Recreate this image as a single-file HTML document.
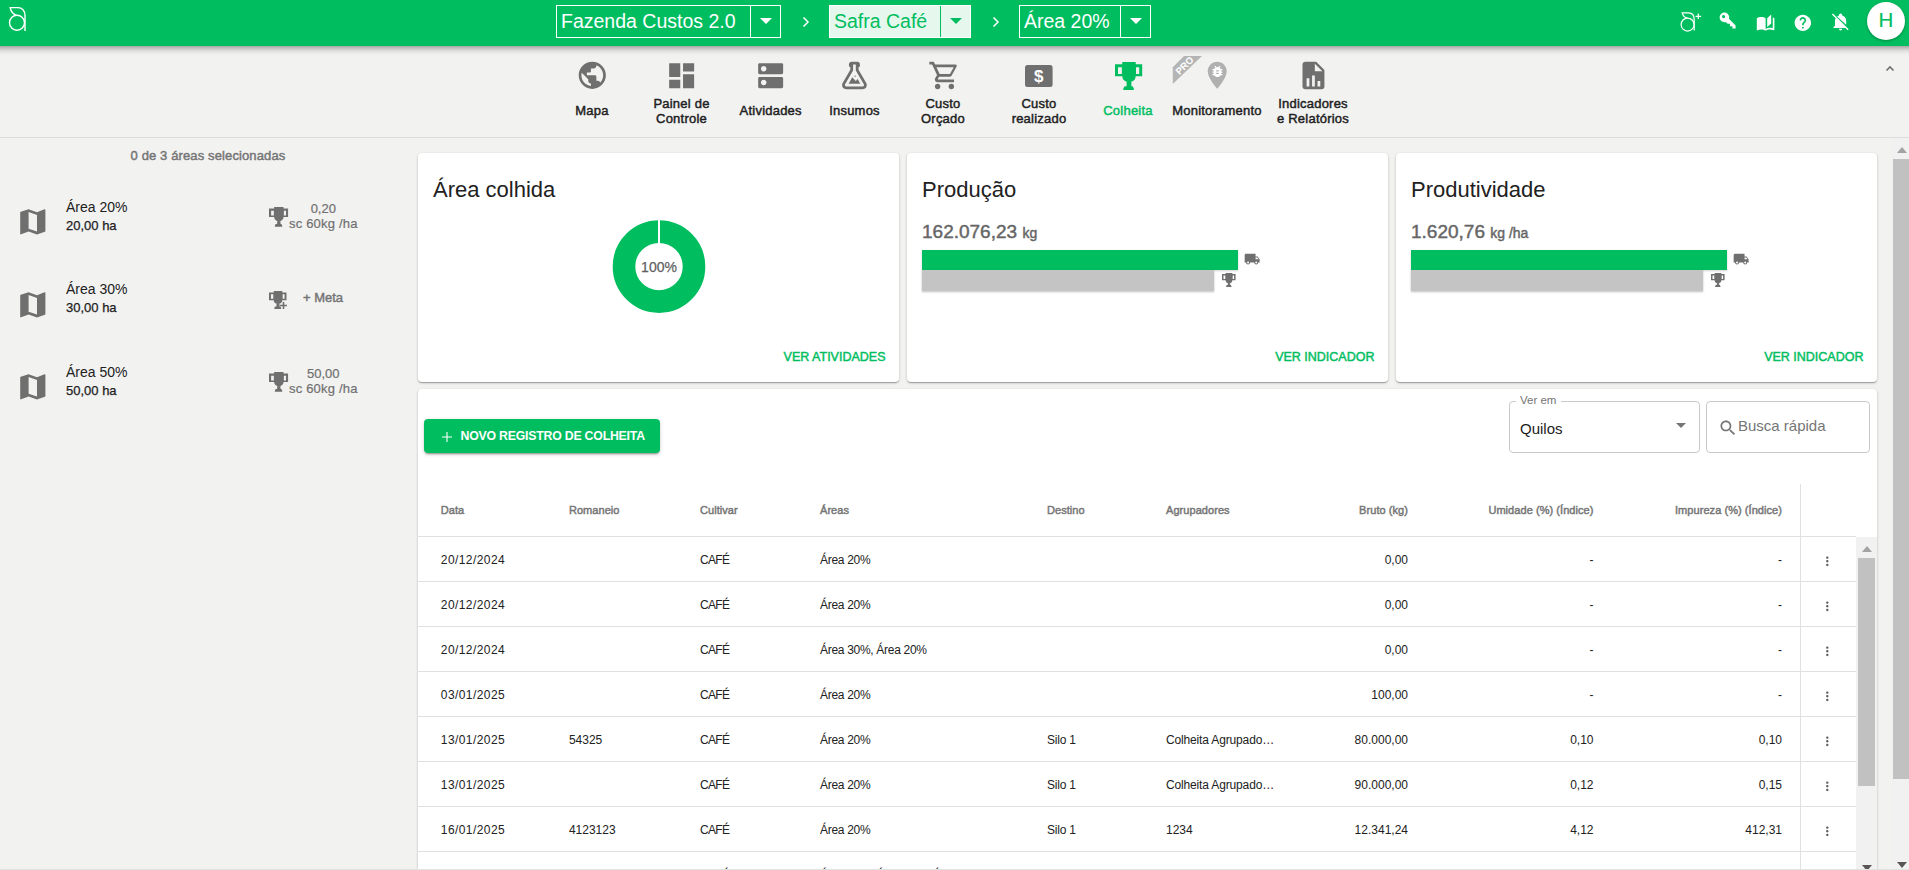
<!DOCTYPE html>
<html><head><meta charset="utf-8"><title>Colheita</title>
<style>
html,body{margin:0;padding:0;width:1909px;height:870px;overflow:hidden;background:#F2F2F1;font-family:"Liberation Sans", sans-serif;}
.t{position:absolute;white-space:nowrap;line-height:1;}
.i{position:absolute;overflow:visible;}
.b{position:absolute;box-sizing:border-box;}
</style></head><body>

<div class="b" style="left:418.00px;top:153.00px;width:481.00px;height:229.00px;background:#fff;border-radius:4px;box-shadow:0 1px 3px rgba(0,0,0,0.2),0 1px 1px rgba(0,0,0,0.14),0 2px 1px -1px rgba(0,0,0,0.12);"></div>
<div class="b" style="left:907.00px;top:153.00px;width:481.00px;height:229.00px;background:#fff;border-radius:4px;box-shadow:0 1px 3px rgba(0,0,0,0.2),0 1px 1px rgba(0,0,0,0.14),0 2px 1px -1px rgba(0,0,0,0.12);"></div>
<div class="b" style="left:1396.00px;top:153.00px;width:481.00px;height:229.00px;background:#fff;border-radius:4px;box-shadow:0 1px 3px rgba(0,0,0,0.2),0 1px 1px rgba(0,0,0,0.14),0 2px 1px -1px rgba(0,0,0,0.12);"></div>
<div class="b" style="left:418.00px;top:389.00px;width:1459.00px;height:600.00px;background:#fff;border-radius:4px;box-shadow:0 1px 3px rgba(0,0,0,0.2),0 1px 1px rgba(0,0,0,0.14),0 2px 1px -1px rgba(0,0,0,0.12);"></div>
<div class="b" style="left:-20.00px;top:0.00px;width:1949.00px;height:45.50px;background:#00BE5F;box-shadow:0 2px 4px -1px rgba(0,0,0,0.2),0 4px 5px 0 rgba(0,0,0,0.14),0 1px 10px 0 rgba(0,0,0,0.12);z-index:5"></div>
<div style="position:absolute;left:0;top:0;width:1909px;height:46px;z-index:6">
<svg class="i" style="left:0;top:0;width:40px;height:40px" viewBox="0 0 40 40"><g fill="none" stroke="#fff" stroke-width="1.4"><circle cx="17" cy="22.8" r="7.5"/><path d="M25 31V15.5C25 10.5 22 7.6 18 7.6H10.2C10.8 11 13 14 16.5 15.3"/></g></svg>
<div class="b" style="left:556.00px;top:5.00px;width:225.00px;height:33.00px;border:1px solid #fff;"></div>
<div class="b" style="left:750.00px;top:6.00px;width:1.00px;height:31.00px;background:#fff"></div>
<div class="t" style="left:561.00px;top:12.49px;font-size:19.5px;color:#fff;font-weight:normal;">Fazenda Custos 2.0</div>
<svg class="i" style="left:759.50px;top:18px;width:12px;height:6px" viewBox="0 0 12 6"><path fill="#fff" d="M0 0h12L6 6z"/></svg>
<svg class="i" style="left:802px;top:16px;width:8px;height:12px" viewBox="0 0 8 12"><path fill="none" stroke="#fff" stroke-width="1.5" d="M1.5 1.5L6 6L1.5 10.5"/></svg>
<div class="b" style="left:829.00px;top:5.00px;width:142.00px;height:33.00px;border:1px solid #fff;background:#E6F7EE;"></div>
<div class="b" style="left:940.00px;top:6.00px;width:1.00px;height:31.00px;background:#00BE5F"></div>
<div class="t" style="left:834.00px;top:12.49px;font-size:19.5px;color:#00BE5F;font-weight:normal;">Safra Café</div>
<svg class="i" style="left:949.50px;top:18px;width:12px;height:6px" viewBox="0 0 12 6"><path fill="#00BE5F" d="M0 0h12L6 6z"/></svg>
<svg class="i" style="left:992px;top:16px;width:8px;height:12px" viewBox="0 0 8 12"><path fill="none" stroke="#fff" stroke-width="1.5" d="M1.5 1.5L6 6L1.5 10.5"/></svg>
<div class="b" style="left:1019.00px;top:5.00px;width:132.00px;height:33.00px;border:1px solid #fff;"></div>
<div class="b" style="left:1120.00px;top:6.00px;width:1.00px;height:31.00px;background:#fff"></div>
<div class="t" style="left:1024.00px;top:12.49px;font-size:19.5px;color:#fff;font-weight:normal;">Área 20%</div>
<svg class="i" style="left:1129.50px;top:18px;width:12px;height:6px" viewBox="0 0 12 6"><path fill="#fff" d="M0 0h12L6 6z"/></svg>
<svg class="i" style="left:1670px;top:0;width:40px;height:40px" viewBox="0 0 40 40"><g fill="none" stroke="#fff" stroke-width="1.2"><circle cx="17.6" cy="24.6" r="6.5"/><path d="M24.2 30.5V19.5C24.2 15.5 22 12.9 18.5 12.9H12.2C12.8 15.5 14.5 17.5 17.5 18.2"/><path d="M28.3 13.5v5.5M25.6 16.3h5.5"/></g></svg>
<svg class="i" style="left:1718.40px;top:11.30px;width:19.20px;height:19.20px;" viewBox="0 0 24 24"><path fill="#fff" d="M22,18V22H18V19H15V16H12L9.74,13.74C9.19,13.91 8.61,14 8,14A6,6 0 0,1 2,8A6,6 0 0,1 8,2A6,6 0 0,1 14,8C14,8.61 13.91,9.19 13.74,9.74L22,18M7,5A2,2 0 0,0 5,7A2,2 0 0,0 7,9A2,2 0 0,0 9,7A2,2 0 0,0 7,5Z"/></svg>
<svg class="i" style="left:1756.20px;top:13.40px;width:19.20px;height:19.20px;" viewBox="0 0 24 24"><path fill="#fff" d="M19 2L14 6.5V17.5L19 13V2M6.5 5C4.55 5 2.45 5.4 1 6.5V21.16C1 21.41 1.25 21.66 1.5 21.66C1.6 21.66 1.65 21.59 1.75 21.59C3.1 20.94 5.05 20.5 6.5 20.5C8.45 20.5 10.55 20.9 12 22C13.35 21.15 15.8 20.5 17.5 20.5C19.15 20.5 20.85 20.81 22.25 21.56C22.35 21.61 22.4 21.59 22.5 21.59C22.75 21.59 23 21.34 23 21.09V6.5C22.4 6.05 21.75 5.75 21 5.5V19C19.9 18.65 18.7 18.5 17.5 18.5C15.8 18.5 13.35 19.15 12 20V6.5C10.55 5.4 8.45 5 6.5 5Z"/></svg>
<svg class="i" style="left:1793.00px;top:13.20px;width:19.70px;height:19.70px;" viewBox="0 0 24 24"><path fill="#fff" d="M12 2C6.48 2 2 6.48 2 12s4.48 10 10 10 10-4.48 10-10S17.52 2 12 2zm1 17h-2v-2h2v2zm2.07-7.75l-.9.92C13.45 12.9 13 13.5 13 15h-2v-.5c0-1.1.45-2.1 1.17-2.83l1.24-1.26c.37-.36.59-.86.59-1.41 0-1.1-.9-2-2-2s-2 .9-2 2H8c0-2.21 1.79-4 4-4s4 1.79 4 4c0 .88-.36 1.680-.93 2.25z"/></svg>
<svg class="i" style="left:1831.10px;top:11.50px;width:19.20px;height:19.20px;" viewBox="0 0 24 24"><path fill="#fff" d="M20.84,22.73L18.11,20H3V19L5,17V11C5,9.86 5.29,8.73 5.83,7.72L1.11,3L2.39,1.73L22.11,21.46L20.84,22.73M19,15.8V11C19,7.9 16.97,5.17 14,4.29C14,4.19 14,4.1 14,4A2,2 0 0,0 12,2A2,2 0 0,0 10,4C10,4.1 10,4.19 10,4.29C9.110,4.55 8.29,5 7.55,5.6L19,15.8M12,23A2,2 0 0,0 14,21H10A2,2 0 0,0 12,23Z"/></svg>
<div class="b" style="left:1867.00px;top:2.40px;width:38.00px;height:38.00px;background:#fff;border-radius:50%;box-shadow:0 1px 3px rgba(0,0,0,0.3)"></div>
<div class="t" style="left:1586.00px;width:600px;text-align:center;top:10.45px;font-size:20.5px;color:#00BE5F;font-weight:normal;-webkit-text-stroke:0.2px currentColor">H</div>
</div>
<div class="b" style="left:0.00px;top:137.00px;width:1909.00px;height:1.00px;background:#DCDCDC"></div>
<svg class="i" style="left:575.80px;top:59.20px;width:32.60px;height:32.60px;" viewBox="0 0 24 24"><path fill="#6F6F6F" d="M12 2C6.48 2 2 6.48 2 12s4.48 10 10 10 10-4.48 10-10S17.52 2 12 2zm-1 17.93c-3.95-.49-7-3.850-7-7.93 0-.62.08-1.21.21-1.79L9 15v1c0 1.1.9 2 2 2v1.93zm6.9-2.54c-.26-.81-1-1.39-1.9-1.39h-1v-3c0-.55-.45-1-1-1H8v-2h2c.55 0 1-.45 1-1V7h2c1.1 0 2-.9 2-2v-.41c2.93 1.19 5 4.060 5 7.41 0 2.08-.8 3.97-2.1 5.39z"/></svg>
<div class="t" style="left:292.00px;width:600px;text-align:center;top:104.00px;font-size:13px;color:#212121;font-weight:normal;-webkit-text-stroke:0.45px currentColor;letter-spacing:0.22px">Mapa</div>
<svg class="i" style="left:664.80px;top:58.70px;width:33.30px;height:33.30px;" viewBox="0 0 24 24"><path fill="#6F6F6F" d="M3 13h8V3H3v10zm0 8h8v-6H3v6zm10 0h8V11h-8v10zm0-18v6h8V3h-8z"/></svg>
<div class="t" style="left:381.50px;width:600px;text-align:center;top:96.60px;font-size:13px;color:#212121;font-weight:normal;-webkit-text-stroke:0.45px currentColor;letter-spacing:0.22px">Painel de</div>
<div class="t" style="left:381.50px;width:600px;text-align:center;top:111.70px;font-size:13px;color:#212121;font-weight:normal;-webkit-text-stroke:0.45px currentColor;letter-spacing:0.22px">Controle</div>
<svg class="i" style="left:754.20px;top:58.70px;width:33.30px;height:33.30px;" viewBox="0 0 24 24"><path fill="#6F6F6F" d="M20 13H4c-.55 0-1 .45-1 1v6c0 .55.45 1 1 1h16c.55 0 1-.45 1-1v-6c0-.55-.45-1-1-1zM7 19c-1.1 0-2-.9-2-2s.9-2 2-2 2 .9 2 2-.9 2-2 2zM20 3H4c-.55 0-1 .45-1 1v6c0 .55.45 1 1 1h16c.55 0 1-.45 1-1V4c0-.55-.45-1-1-1zM7 9c-1.1 0-2-.9-2-2s.9-2 2-2 2 .9 2 2-.9 2-2 2z"/></svg>
<div class="t" style="left:470.70px;width:600px;text-align:center;top:104.00px;font-size:13px;color:#212121;font-weight:normal;-webkit-text-stroke:0.45px currentColor;letter-spacing:0.22px">Atividades</div>
<svg class="i" style="left:837.90px;top:59.20px;width:32.90px;height:32.90px;" viewBox="0 0 24 24"><path fill="#6F6F6F" d="M5,19A1,1 0 0,0 6,20H18A1,1 0 0,0 19,19C19,18.79 18.93,18.59 18.82,18.43L13,8.35V4H11V8.35L5.18,18.43C5.07,18.59 5,18.79 5,19M6,22A3,3 0 0,1 3,19C3,18.4 3.18,17.84 3.5,17.37L9,7.810V6A1,1 0 0,1 8,5V4A2,2 0 0,1 10,2H14A2,2 0 0,1 16,4V5A1,1 0 0,1 15,6V7.81L20.5,17.37C20.82,17.84 21,18.4 21,19A3,3 0 0,1 18,22H6M13,16L14.34,14.66L16.27,18H7.73L10.39,13.39L13,16M12.5,12A0.5,0.5 0 0,1 13,12.5A0.5,0.5 0 0,1 12.5,13A0.5,0.5 0 0,1 12,12.5A0.5,0.5 0 0,1 12.5,12Z"/></svg>
<div class="t" style="left:554.50px;width:600px;text-align:center;top:104.00px;font-size:13px;color:#212121;font-weight:normal;-webkit-text-stroke:0.45px currentColor;letter-spacing:0.22px">Insumos</div>
<svg class="i" style="left:927.50px;top:59.20px;width:32.90px;height:32.90px;" viewBox="0 0 24 24"><path fill="#6F6F6F" d="M17,18A2,2 0 0,1 19,20A2,2 0 0,1 17,22C15.89,22 15,21.1 15,20C15,18.89 15.89,18 17,18M1,2H4.27L5.21,4H20A1,1 0 0,1 21,5C21,5.17 20.95,5.34 20.88,5.5L17.3,11.97C16.96,12.58 16.3,13 15.55,13H8.1L7.2,14.63L7.17,14.75A0.25,0.25 0 0,0 7.42,15H19V17H7C5.89,17 5,16.1 5,15C5,14.65 5.09,14.32 5.24,14.04L6.6,11.59L3,4H1V2M7,18A2,2 0 0,1 9,20A2,2 0 0,1 7,22C5.89,22 5,21.1 5,20C5,18.89 5.89,18 7,18M16,11L18.78,6H6.14L8.5,11H16Z"/></svg>
<div class="t" style="left:643.00px;width:600px;text-align:center;top:96.60px;font-size:13px;color:#212121;font-weight:normal;-webkit-text-stroke:0.45px currentColor;letter-spacing:0.22px">Custo</div>
<div class="t" style="left:643.00px;width:600px;text-align:center;top:111.70px;font-size:13px;color:#212121;font-weight:normal;-webkit-text-stroke:0.45px currentColor;letter-spacing:0.22px">Orçado</div>
<svg class="i" style="left:1025px;top:64.5px;width:28px;height:22px" viewBox="0 0 28 22"><rect x="0" y="0" width="27.6" height="22" rx="2.5" fill="#6F6F6F"/><text x="13.8" y="17.2" text-anchor="middle" font-family="Liberation Sans" font-weight="bold" font-size="17" fill="#fff">$</text></svg>
<div class="t" style="left:739.00px;width:600px;text-align:center;top:96.60px;font-size:13px;color:#212121;font-weight:normal;-webkit-text-stroke:0.45px currentColor;letter-spacing:0.22px">Custo</div>
<div class="t" style="left:739.00px;width:600px;text-align:center;top:111.70px;font-size:13px;color:#212121;font-weight:normal;-webkit-text-stroke:0.45px currentColor;letter-spacing:0.22px">realizado</div>
<svg class="i" style="left:1115.00px;top:61.60px;width:27.20px;height:28.10px" viewBox="0 0 27.2 28.1"><path fill="#00BE5F" fill-rule="evenodd" d="M0 2.2H27.2V14.3H0ZM3 5.2V12.1H6.9V5.2ZM21 5.2V12.1H24.2V5.2Z"/><path fill="#00BE5F" d="M7.3 0H20.7V14.3A6.7 6.1 0 0 1 7.3 14.3ZM11.6 19H16.4V24.2H17.6Q19 25.6 19 28.1H8.2Q8.2 25.6 9.6 24.2H11.6Z"/></svg>
<div class="t" style="left:828.00px;width:600px;text-align:center;top:104.00px;font-size:13px;color:#00BE5F;font-weight:normal;-webkit-text-stroke:0.45px currentColor;letter-spacing:0.22px">Colheita</div>
<svg class="i" style="left:1172px;top:56px;width:31px;height:29px" viewBox="0 0 31 29"><path fill="#B5B5B5" d="M0.8 11.2L12 0H30L0.8 28z"/><text x="0" y="0" transform="translate(7.6 19.2) rotate(-45)" font-family="Liberation Sans" font-weight="bold" font-size="9.6" fill="#fff">PRO</text></svg>
<svg class="i" style="left:1201.20px;top:59.30px;width:32.40px;height:32.40px;" viewBox="0 0 24 24"><path fill="#B0B0B0" d="M12,2C8.13,2 5,5.13 5,9C5,14.25 12,22 12,22C12,22 19,14.25 19,9C19,5.130 15.870,2 12,2Z"/></svg>
<svg class="i" style="left:1210.20px;top:63.80px;width:14.90px;height:14.90px;" viewBox="0 0 24 24"><path fill="#fff" d="M14,12H10V10H14M14,16H10V14H14M20,8H17.19C16.74,7.22 16.12,6.55 15.37,6.04L17,4.41L15.59,3L13.42,5.17C12.96,5.06 12.5,5 12,5C11.5,5 11.04,5.06 10.59,5.17L8.41,3L7,4.41L8.62,6.04C7.88,6.55 7.26,7.22 6.81,8H4V10H6.09C6.04,10.33 6,10.66 6,11V12H4V14H6V15C6,15.34 6.04,15.67 6.09,16H4V18H6.81C7.85,19.79 9.78,21 12,21C14.22,21 16.150,19.79 17.19,18H20V16H17.91C17.96,15.67 18,15.34 18,15V14H20V12H18V11C18,10.66 17.96,10.33 17.91,10H20V8Z"/></svg>
<div class="t" style="left:917.00px;width:600px;text-align:center;top:104.00px;font-size:13px;color:#212121;font-weight:normal;-webkit-text-stroke:0.45px currentColor;letter-spacing:0.22px">Monitoramento</div>
<svg class="i" style="left:1296.50px;top:59.00px;width:32.90px;height:32.90px;" viewBox="0 0 24 24"><path fill="#6F6F6F" d="M13,9H18.5L13,3.5V9M6,2H14L20,8V20A2,2 0 0,1 18,22H6C4.89,22 4,21.1 4,20V4C4,2.89 4.89,2 6,2M7,20H9V14H7V20M11,20H13V12H11V20M15,20H17V16H15V20Z"/></svg>
<div class="t" style="left:1013.00px;width:600px;text-align:center;top:96.60px;font-size:13px;color:#212121;font-weight:normal;-webkit-text-stroke:0.45px currentColor;letter-spacing:0.22px">Indicadores</div>
<div class="t" style="left:1013.00px;width:600px;text-align:center;top:111.70px;font-size:13px;color:#212121;font-weight:normal;-webkit-text-stroke:0.45px currentColor;letter-spacing:0.22px">e Relatórios</div>
<svg class="i" style="left:1885px;top:64px;width:10px;height:8px" viewBox="0 0 10 8"><path fill="none" stroke="#6F6F6F" stroke-width="1.6" d="M1.5 6.5L5 3L8.5 6.5"/></svg>
<div class="t" style="left:-92.00px;width:600px;text-align:center;top:149.10px;font-size:13px;color:#757575;font-weight:normal;-webkit-text-stroke:0.45px currentColor;letter-spacing:0.12px">0 de 3 áreas selecionadas</div>
<svg class="i" style="left:15.80px;top:205.30px;width:33.60px;height:33.60px;" viewBox="0 0 24 24"><path fill="#6F6F6F" d="M15,19L9,16.89V5L15,7.11M20.5,3C20.44,3 20.39,3 20.34,3L15,5.1L9,3L3.36,4.9C3.15,4.97 3,5.15 3,5.38V20.5A0.5,0.5 0 0,0 3.5,21C3.55,21 3.61,21 3.66,20.97L9,18.9L15,21L20.64,19.1C20.85,19 21,18.85 21,18.62V3.5A0.5,0.5 0 0,0 20.5,3Z"/></svg>
<div class="t" style="left:66.00px;top:199.95px;font-size:14px;color:#212121;font-weight:normal;">Área 20%</div>
<div class="t" style="left:66.00px;top:218.80px;font-size:13px;color:#212121;font-weight:normal;-webkit-text-stroke:0.25px currentColor">20,00 ha</div>
<svg class="i" style="left:268.90px;top:207.10px;width:19.10px;height:19.73px" viewBox="0 0 27.2 28.1"><path fill="#6F6F6F" fill-rule="evenodd" d="M0 2.2H27.2V14.3H0ZM3 5.2V12.1H6.9V5.2ZM21 5.2V12.1H24.2V5.2Z"/><path fill="#6F6F6F" d="M7.3 0H20.7V14.3A6.7 6.1 0 0 1 7.3 14.3ZM11.6 19H16.4V24.2H17.6Q19 25.6 19 28.1H8.2Q8.2 25.6 9.6 24.2H11.6Z"/></svg>
<div class="t" style="left:23.30px;width:600px;text-align:center;top:201.90px;font-size:13px;color:#707070;font-weight:normal;-webkit-text-stroke:0.2px currentColor">0,20</div>
<div class="t" style="left:23.30px;width:600px;text-align:center;top:216.90px;font-size:13px;color:#707070;font-weight:normal;-webkit-text-stroke:0.2px currentColor;letter-spacing:0.2px">sc 60kg /ha</div>
<svg class="i" style="left:15.80px;top:287.80px;width:33.60px;height:33.60px;" viewBox="0 0 24 24"><path fill="#6F6F6F" d="M15,19L9,16.89V5L15,7.11M20.5,3C20.44,3 20.39,3 20.34,3L15,5.1L9,3L3.36,4.9C3.15,4.97 3,5.15 3,5.38V20.5A0.5,0.5 0 0,0 3.5,21C3.55,21 3.61,21 3.66,20.97L9,18.9L15,21L20.64,19.1C20.85,19 21,18.85 21,18.62V3.5A0.5,0.5 0 0,0 20.5,3Z"/></svg>
<div class="t" style="left:66.00px;top:282.45px;font-size:14px;color:#212121;font-weight:normal;">Área 30%</div>
<div class="t" style="left:66.00px;top:301.30px;font-size:13px;color:#212121;font-weight:normal;-webkit-text-stroke:0.25px currentColor">30,00 ha</div>
<svg class="i" style="left:268.90px;top:291.00px;width:17.50px;height:18.08px" viewBox="0 0 27.2 28.1"><path fill="#6F6F6F" fill-rule="evenodd" d="M0 2.2H27.2V14.3H0ZM3 5.2V12.1H6.9V5.2ZM21 5.2V12.1H24.2V5.2Z"/><path fill="#6F6F6F" d="M7.3 0H20.7V14.3A6.7 6.1 0 0 1 7.3 14.3ZM11.6 19H16.4V24.2H17.6Q19 25.6 19 28.1H8.2Q8.2 25.6 9.6 24.2H11.6Z"/></svg>
<svg class="i" style="left:280px;top:302px;width:7px;height:7px" viewBox="0 0 7 7"><path fill="#6F6F6F" d="M2.7 0h1.6v2.7H7v1.6H4.3V7H2.7V4.3H0V2.7h2.7z"/></svg>
<div class="t" style="left:303.00px;top:291.40px;font-size:13px;color:#757575;font-weight:normal;-webkit-text-stroke:0.45px currentColor;">+ Meta</div>
<svg class="i" style="left:15.80px;top:370.30px;width:33.60px;height:33.60px;" viewBox="0 0 24 24"><path fill="#6F6F6F" d="M15,19L9,16.89V5L15,7.11M20.5,3C20.44,3 20.39,3 20.34,3L15,5.1L9,3L3.36,4.9C3.15,4.97 3,5.15 3,5.38V20.5A0.5,0.5 0 0,0 3.5,21C3.55,21 3.61,21 3.66,20.97L9,18.9L15,21L20.64,19.1C20.85,19 21,18.85 21,18.62V3.5A0.5,0.5 0 0,0 20.5,3Z"/></svg>
<div class="t" style="left:66.00px;top:364.95px;font-size:14px;color:#212121;font-weight:normal;">Área 50%</div>
<div class="t" style="left:66.00px;top:383.80px;font-size:13px;color:#212121;font-weight:normal;-webkit-text-stroke:0.25px currentColor">50,00 ha</div>
<svg class="i" style="left:268.90px;top:372.10px;width:19.10px;height:19.73px" viewBox="0 0 27.2 28.1"><path fill="#6F6F6F" fill-rule="evenodd" d="M0 2.2H27.2V14.3H0ZM3 5.2V12.1H6.9V5.2ZM21 5.2V12.1H24.2V5.2Z"/><path fill="#6F6F6F" d="M7.3 0H20.7V14.3A6.7 6.1 0 0 1 7.3 14.3ZM11.6 19H16.4V24.2H17.6Q19 25.6 19 28.1H8.2Q8.2 25.6 9.6 24.2H11.6Z"/></svg>
<div class="t" style="left:23.30px;width:600px;text-align:center;top:366.90px;font-size:13px;color:#707070;font-weight:normal;-webkit-text-stroke:0.2px currentColor">50,00</div>
<div class="t" style="left:23.30px;width:600px;text-align:center;top:381.90px;font-size:13px;color:#707070;font-weight:normal;-webkit-text-stroke:0.2px currentColor;letter-spacing:0.2px">sc 60kg /ha</div>
<div class="t" style="left:433.00px;top:178.78px;font-size:22px;color:#212121;font-weight:normal;">Área colhida</div>
<div class="t" style="left:922.00px;top:178.78px;font-size:22px;color:#212121;font-weight:normal;">Produção</div>
<div class="t" style="left:1411.00px;top:178.78px;font-size:22px;color:#212121;font-weight:normal;">Produtividade</div>
<svg class="i" style="left:612px;top:220px;width:94px;height:94px" viewBox="0 0 94 94"><circle cx="47" cy="46.6" r="35" fill="none" stroke="#00BE5F" stroke-width="22.6"/><rect x="46" y="0" width="2" height="24" fill="#fff"/></svg>
<div class="t" style="left:359.00px;width:600px;text-align:center;top:260.15px;font-size:14px;color:#616161;font-weight:normal;-webkit-text-stroke:0.25px currentColor">100%</div>
<div class="t" style="right:1023.50px;top:350.62px;font-size:12.5px;color:#00BE5F;font-weight:normal;-webkit-text-stroke:0.45px currentColor;">VER ATIVIDADES</div>
<div class="t" style="right:534.50px;top:350.62px;font-size:12.5px;color:#00BE5F;font-weight:normal;-webkit-text-stroke:0.45px currentColor;">VER INDICADOR</div>
<div class="t" style="right:45.50px;top:350.62px;font-size:12.5px;color:#00BE5F;font-weight:normal;-webkit-text-stroke:0.45px currentColor;">VER INDICADOR</div>
<div class="t" style="left:922.00px;top:222.22px;font-size:19px;color:#666;-webkit-text-stroke:0.45px currentColor;">162.076,23 <span style="font-size:14px">kg</span></div>
<div class="b" style="left:922.00px;top:250.00px;width:316.00px;height:20.00px;background:#00BE5F;box-shadow:0 1px 2px rgba(0,0,0,0.18)"></div>
<div class="b" style="left:922.00px;top:270.00px;width:292.00px;height:21.00px;background:#C4C4C4;box-shadow:0 1px 2px rgba(0,0,0,0.25)"></div>
<svg class="i" style="left:1243.90px;top:251.00px;width:16.30px;height:16.30px;" viewBox="0 0 24 24"><path fill="#6F6F6F" d="M18,18.5A1.5,1.5 0 0,1 16.5,17A1.5,1.5 0 0,1 18,15.5A1.5,1.5 0 0,1 19.5,17A1.5,1.5 0 0,1 18,18.5M19.5,9.5L21.46,12H17V9.5M6,18.5A1.5,1.5 0 0,1 4.5,17A1.5,1.5 0 0,1 6,15.5A1.5,1.5 0 0,1 7.5,17A1.5,1.5 0 0,1 6,18.5M20,8H17V4H3C1.89,4 1,4.89 1,6V17H3A3,3 0 0,0 6,20A3,3 0 0,0 9,17H15A3,3 0 0,0 18,20A3,3 0 0,0 21,17H23V12L20,8Z"/></svg>
<svg class="i" style="left:1222.00px;top:272.80px;width:13.60px;height:14.05px" viewBox="0 0 27.2 28.1"><path fill="#6F6F6F" fill-rule="evenodd" d="M0 2.2H27.2V14.3H0ZM3 5.2V12.1H6.9V5.2ZM21 5.2V12.1H24.2V5.2Z"/><path fill="#6F6F6F" d="M7.3 0H20.7V14.3A6.7 6.1 0 0 1 7.3 14.3ZM11.6 19H16.4V24.2H17.6Q19 25.6 19 28.1H8.2Q8.2 25.6 9.6 24.2H11.6Z"/></svg>
<div class="t" style="left:1411.00px;top:222.22px;font-size:19px;color:#666;-webkit-text-stroke:0.45px currentColor;">1.620,76 <span style="font-size:14px">kg /ha</span></div>
<div class="b" style="left:1411.00px;top:250.00px;width:316.00px;height:20.00px;background:#00BE5F;box-shadow:0 1px 2px rgba(0,0,0,0.18)"></div>
<div class="b" style="left:1411.00px;top:270.00px;width:292.00px;height:21.00px;background:#C4C4C4;box-shadow:0 1px 2px rgba(0,0,0,0.25)"></div>
<svg class="i" style="left:1732.90px;top:251.00px;width:16.30px;height:16.30px;" viewBox="0 0 24 24"><path fill="#6F6F6F" d="M18,18.5A1.5,1.5 0 0,1 16.5,17A1.5,1.5 0 0,1 18,15.5A1.5,1.5 0 0,1 19.5,17A1.5,1.5 0 0,1 18,18.5M19.5,9.5L21.46,12H17V9.5M6,18.5A1.5,1.5 0 0,1 4.5,17A1.5,1.5 0 0,1 6,15.5A1.5,1.5 0 0,1 7.5,17A1.5,1.5 0 0,1 6,18.5M20,8H17V4H3C1.89,4 1,4.89 1,6V17H3A3,3 0 0,0 6,20A3,3 0 0,0 9,17H15A3,3 0 0,0 18,20A3,3 0 0,0 21,17H23V12L20,8Z"/></svg>
<svg class="i" style="left:1711.00px;top:272.80px;width:13.60px;height:14.05px" viewBox="0 0 27.2 28.1"><path fill="#6F6F6F" fill-rule="evenodd" d="M0 2.2H27.2V14.3H0ZM3 5.2V12.1H6.9V5.2ZM21 5.2V12.1H24.2V5.2Z"/><path fill="#6F6F6F" d="M7.3 0H20.7V14.3A6.7 6.1 0 0 1 7.3 14.3ZM11.6 19H16.4V24.2H17.6Q19 25.6 19 28.1H8.2Q8.2 25.6 9.6 24.2H11.6Z"/></svg>
<div class="b" style="left:424.00px;top:419.00px;width:236.00px;height:34.00px;background:#00BE5F;border-radius:4px;box-shadow:0 3px 1px -2px rgba(0,0,0,0.2),0 2px 2px 0 rgba(0,0,0,0.14),0 1px 5px 0 rgba(0,0,0,0.12)"></div>
<svg class="i" style="left:441.5px;top:431.5px;width:10px;height:10px" viewBox="0 0 10 10"><path fill="#fff" d="M4.45 0h1.1v4.45H10v1.1H5.55V10H4.45V5.55H0V4.45h4.45z"/></svg>
<div class="t" style="left:460.60px;top:429.69px;font-size:12.3px;color:#fff;font-weight:bold;letter-spacing:-0.22px">NOVO REGISTRO DE COLHEITA</div>
<div class="b" style="left:1509.00px;top:401.00px;width:191.00px;height:52.00px;border:1px solid #C9C9C9;border-radius:4px"></div>
<div class="b" style="left:1516.00px;top:399.00px;width:45.00px;height:5.00px;background:#fff"></div>
<div class="t" style="left:1520.00px;top:394.57px;font-size:11.5px;color:#757575;font-weight:normal;">Ver em</div>
<div class="t" style="left:1520.00px;top:420.90px;font-size:15px;color:#212121;font-weight:normal;">Quilos</div>
<svg class="i" style="left:1676px;top:423px;width:10px;height:5px" viewBox="0 0 10 5"><path fill="#757575" d="M0 0h10L5 5z"/></svg>
<div class="b" style="left:1706.00px;top:401.00px;width:164.00px;height:52.00px;border:1px solid #C9C9C9;border-radius:4px"></div>
<svg class="i" style="left:1717.50px;top:417.90px;width:20.00px;height:20.00px;" viewBox="0 0 24 24"><path fill="#757575" d="M15.5 14h-.79l-.28-.27C15.41 12.59 16 11.11 16 9.5 16 5.91 13.09 3 9.5 3S3 5.91 3 9.5 5.91 16 9.5 16c1.61 0 3.09-.59 4.23-1.57l.27.28v.79l5 4.99L20.49 19l-4.99-5zm-6 0C7.01 14 5 11.99 5 9.5S7.01 5 9.5 5 14 7.01 14 9.5 11.99 14 9.5 14z"/></svg>
<div class="t" style="left:1738.00px;top:417.70px;font-size:15px;color:#757575;font-weight:normal;">Busca rápida</div>
<div class="t" style="left:440.80px;top:504.89px;font-size:11px;color:#757575;font-weight:normal;-webkit-text-stroke:0.45px currentColor;letter-spacing:0.06px">Data</div>
<div class="t" style="left:568.90px;top:504.89px;font-size:11px;color:#757575;font-weight:normal;-webkit-text-stroke:0.45px currentColor;letter-spacing:0.06px">Romaneio</div>
<div class="t" style="left:700.00px;top:504.89px;font-size:11px;color:#757575;font-weight:normal;-webkit-text-stroke:0.45px currentColor;letter-spacing:0.06px">Cultivar</div>
<div class="t" style="left:820.00px;top:504.89px;font-size:11px;color:#757575;font-weight:normal;-webkit-text-stroke:0.45px currentColor;letter-spacing:0.06px">Áreas</div>
<div class="t" style="left:1047.00px;top:504.89px;font-size:11px;color:#757575;font-weight:normal;-webkit-text-stroke:0.45px currentColor;letter-spacing:0.06px">Destino</div>
<div class="t" style="left:1166.00px;top:504.89px;font-size:11px;color:#757575;font-weight:normal;-webkit-text-stroke:0.45px currentColor;letter-spacing:0.06px">Agrupadores</div>
<div class="t" style="right:501.00px;top:504.89px;font-size:11px;color:#757575;font-weight:normal;-webkit-text-stroke:0.45px currentColor;letter-spacing:0.06px">Bruto (kg)</div>
<div class="t" style="right:315.50px;top:504.89px;font-size:11px;color:#757575;font-weight:normal;-webkit-text-stroke:0.45px currentColor;letter-spacing:0.06px">Umidade (%) (Índice)</div>
<div class="t" style="right:127.00px;top:504.89px;font-size:11px;color:#757575;font-weight:normal;-webkit-text-stroke:0.45px currentColor;letter-spacing:0.06px">Impureza (%) (Índice)</div>
<div class="b" style="left:418.00px;top:536.00px;width:1438.00px;height:1.00px;background:#E0E0E0"></div>
<div class="b" style="left:1800.00px;top:484.00px;width:1.00px;height:386.00px;background:#E0E0E0"></div>
<div class="t" style="left:440.80px;top:553.84px;font-size:12px;color:#212121;font-weight:normal;letter-spacing:0.43px">20/12/2024</div>
<div class="t" style="left:700.00px;top:553.84px;font-size:12px;color:#212121;font-weight:normal;letter-spacing:-0.7px">CAFÉ</div>
<div class="t" style="left:820.00px;top:553.84px;font-size:12px;color:#212121;font-weight:normal;letter-spacing:-0.3px">Área 20%</div>
<div class="t" style="right:501.00px;top:553.84px;font-size:12px;color:#212121;font-weight:normal;">0,00</div>
<div class="t" style="right:315.50px;top:553.84px;font-size:12px;color:#212121;font-weight:normal;">-</div>
<div class="t" style="right:127.00px;top:553.84px;font-size:12px;color:#212121;font-weight:normal;">-</div>
<div class="b" style="left:418.00px;top:581.00px;width:1438.00px;height:1.00px;background:#E0E0E0"></div>
<svg class="i" style="left:1820.00px;top:554.10px;width:14.60px;height:14.60px;" viewBox="0 0 24 24"><path fill="#616161" d="M12 8c1.1 0 2-.9 2-2s-.9-2-2-2-2 .9-2 2 .9 2 2 2zm0 2c-1.1 0-2 .9-2 2s.9 2 2 2 2-.9 2-2-.9-2-2-2zm0 6c-1.1 0-2 .9-2 2s.9 2 2 2 2-.9 2-2-.9-2-2-2z"/></svg>
<div class="t" style="left:440.80px;top:598.84px;font-size:12px;color:#212121;font-weight:normal;letter-spacing:0.43px">20/12/2024</div>
<div class="t" style="left:700.00px;top:598.84px;font-size:12px;color:#212121;font-weight:normal;letter-spacing:-0.7px">CAFÉ</div>
<div class="t" style="left:820.00px;top:598.84px;font-size:12px;color:#212121;font-weight:normal;letter-spacing:-0.3px">Área 20%</div>
<div class="t" style="right:501.00px;top:598.84px;font-size:12px;color:#212121;font-weight:normal;">0,00</div>
<div class="t" style="right:315.50px;top:598.84px;font-size:12px;color:#212121;font-weight:normal;">-</div>
<div class="t" style="right:127.00px;top:598.84px;font-size:12px;color:#212121;font-weight:normal;">-</div>
<div class="b" style="left:418.00px;top:626.00px;width:1438.00px;height:1.00px;background:#E0E0E0"></div>
<svg class="i" style="left:1820.00px;top:599.10px;width:14.60px;height:14.60px;" viewBox="0 0 24 24"><path fill="#616161" d="M12 8c1.1 0 2-.9 2-2s-.9-2-2-2-2 .9-2 2 .9 2 2 2zm0 2c-1.1 0-2 .9-2 2s.9 2 2 2 2-.9 2-2-.9-2-2-2zm0 6c-1.1 0-2 .9-2 2s.9 2 2 2 2-.9 2-2-.9-2-2-2z"/></svg>
<div class="t" style="left:440.80px;top:643.84px;font-size:12px;color:#212121;font-weight:normal;letter-spacing:0.43px">20/12/2024</div>
<div class="t" style="left:700.00px;top:643.84px;font-size:12px;color:#212121;font-weight:normal;letter-spacing:-0.7px">CAFÉ</div>
<div class="t" style="left:820.00px;top:643.84px;font-size:12px;color:#212121;font-weight:normal;letter-spacing:-0.3px">Área 30%, Área 20%</div>
<div class="t" style="right:501.00px;top:643.84px;font-size:12px;color:#212121;font-weight:normal;">0,00</div>
<div class="t" style="right:315.50px;top:643.84px;font-size:12px;color:#212121;font-weight:normal;">-</div>
<div class="t" style="right:127.00px;top:643.84px;font-size:12px;color:#212121;font-weight:normal;">-</div>
<div class="b" style="left:418.00px;top:671.00px;width:1438.00px;height:1.00px;background:#E0E0E0"></div>
<svg class="i" style="left:1820.00px;top:644.10px;width:14.60px;height:14.60px;" viewBox="0 0 24 24"><path fill="#616161" d="M12 8c1.1 0 2-.9 2-2s-.9-2-2-2-2 .9-2 2 .9 2 2 2zm0 2c-1.1 0-2 .9-2 2s.9 2 2 2 2-.9 2-2-.9-2-2-2zm0 6c-1.1 0-2 .9-2 2s.9 2 2 2 2-.9 2-2-.9-2-2-2z"/></svg>
<div class="t" style="left:440.80px;top:688.84px;font-size:12px;color:#212121;font-weight:normal;letter-spacing:0.43px">03/01/2025</div>
<div class="t" style="left:700.00px;top:688.84px;font-size:12px;color:#212121;font-weight:normal;letter-spacing:-0.7px">CAFÉ</div>
<div class="t" style="left:820.00px;top:688.84px;font-size:12px;color:#212121;font-weight:normal;letter-spacing:-0.3px">Área 20%</div>
<div class="t" style="right:501.00px;top:688.84px;font-size:12px;color:#212121;font-weight:normal;">100,00</div>
<div class="t" style="right:315.50px;top:688.84px;font-size:12px;color:#212121;font-weight:normal;">-</div>
<div class="t" style="right:127.00px;top:688.84px;font-size:12px;color:#212121;font-weight:normal;">-</div>
<div class="b" style="left:418.00px;top:716.00px;width:1438.00px;height:1.00px;background:#E0E0E0"></div>
<svg class="i" style="left:1820.00px;top:689.10px;width:14.60px;height:14.60px;" viewBox="0 0 24 24"><path fill="#616161" d="M12 8c1.1 0 2-.9 2-2s-.9-2-2-2-2 .9-2 2 .9 2 2 2zm0 2c-1.1 0-2 .9-2 2s.9 2 2 2 2-.9 2-2-.9-2-2-2zm0 6c-1.1 0-2 .9-2 2s.9 2 2 2 2-.9 2-2-.9-2-2-2z"/></svg>
<div class="t" style="left:440.80px;top:733.84px;font-size:12px;color:#212121;font-weight:normal;letter-spacing:0.43px">13/01/2025</div>
<div class="t" style="left:568.90px;top:733.84px;font-size:12px;color:#212121;font-weight:normal;letter-spacing:0px">54325</div>
<div class="t" style="left:700.00px;top:733.84px;font-size:12px;color:#212121;font-weight:normal;letter-spacing:-0.7px">CAFÉ</div>
<div class="t" style="left:820.00px;top:733.84px;font-size:12px;color:#212121;font-weight:normal;letter-spacing:-0.3px">Área 20%</div>
<div class="t" style="left:1047.00px;top:733.84px;font-size:12px;color:#212121;font-weight:normal;letter-spacing:-0.2px">Silo 1</div>
<div class="t" style="left:1166.00px;top:733.84px;font-size:12px;color:#212121;font-weight:normal;letter-spacing:-0.15px">Colheita Agrupado…</div>
<div class="t" style="right:501.00px;top:733.84px;font-size:12px;color:#212121;font-weight:normal;">80.000,00</div>
<div class="t" style="right:315.50px;top:733.84px;font-size:12px;color:#212121;font-weight:normal;">0,10</div>
<div class="t" style="right:127.00px;top:733.84px;font-size:12px;color:#212121;font-weight:normal;">0,10</div>
<div class="b" style="left:418.00px;top:761.00px;width:1438.00px;height:1.00px;background:#E0E0E0"></div>
<svg class="i" style="left:1820.00px;top:734.10px;width:14.60px;height:14.60px;" viewBox="0 0 24 24"><path fill="#616161" d="M12 8c1.1 0 2-.9 2-2s-.9-2-2-2-2 .9-2 2 .9 2 2 2zm0 2c-1.1 0-2 .9-2 2s.9 2 2 2 2-.9 2-2-.9-2-2-2zm0 6c-1.1 0-2 .9-2 2s.9 2 2 2 2-.9 2-2-.9-2-2-2z"/></svg>
<div class="t" style="left:440.80px;top:778.84px;font-size:12px;color:#212121;font-weight:normal;letter-spacing:0.43px">13/01/2025</div>
<div class="t" style="left:700.00px;top:778.84px;font-size:12px;color:#212121;font-weight:normal;letter-spacing:-0.7px">CAFÉ</div>
<div class="t" style="left:820.00px;top:778.84px;font-size:12px;color:#212121;font-weight:normal;letter-spacing:-0.3px">Área 20%</div>
<div class="t" style="left:1047.00px;top:778.84px;font-size:12px;color:#212121;font-weight:normal;letter-spacing:-0.2px">Silo 1</div>
<div class="t" style="left:1166.00px;top:778.84px;font-size:12px;color:#212121;font-weight:normal;letter-spacing:-0.15px">Colheita Agrupado…</div>
<div class="t" style="right:501.00px;top:778.84px;font-size:12px;color:#212121;font-weight:normal;">90.000,00</div>
<div class="t" style="right:315.50px;top:778.84px;font-size:12px;color:#212121;font-weight:normal;">0,12</div>
<div class="t" style="right:127.00px;top:778.84px;font-size:12px;color:#212121;font-weight:normal;">0,15</div>
<div class="b" style="left:418.00px;top:806.00px;width:1438.00px;height:1.00px;background:#E0E0E0"></div>
<svg class="i" style="left:1820.00px;top:779.10px;width:14.60px;height:14.60px;" viewBox="0 0 24 24"><path fill="#616161" d="M12 8c1.1 0 2-.9 2-2s-.9-2-2-2-2 .9-2 2 .9 2 2 2zm0 2c-1.1 0-2 .9-2 2s.9 2 2 2 2-.9 2-2-.9-2-2-2zm0 6c-1.1 0-2 .9-2 2s.9 2 2 2 2-.9 2-2-.9-2-2-2z"/></svg>
<div class="t" style="left:440.80px;top:823.84px;font-size:12px;color:#212121;font-weight:normal;letter-spacing:0.43px">16/01/2025</div>
<div class="t" style="left:568.90px;top:823.84px;font-size:12px;color:#212121;font-weight:normal;letter-spacing:0px">4123123</div>
<div class="t" style="left:700.00px;top:823.84px;font-size:12px;color:#212121;font-weight:normal;letter-spacing:-0.7px">CAFÉ</div>
<div class="t" style="left:820.00px;top:823.84px;font-size:12px;color:#212121;font-weight:normal;letter-spacing:-0.3px">Área 20%</div>
<div class="t" style="left:1047.00px;top:823.84px;font-size:12px;color:#212121;font-weight:normal;letter-spacing:-0.2px">Silo 1</div>
<div class="t" style="left:1166.00px;top:823.84px;font-size:12px;color:#212121;font-weight:normal;letter-spacing:0px">1234</div>
<div class="t" style="right:501.00px;top:823.84px;font-size:12px;color:#212121;font-weight:normal;">12.341,24</div>
<div class="t" style="right:315.50px;top:823.84px;font-size:12px;color:#212121;font-weight:normal;">4,12</div>
<div class="t" style="right:127.00px;top:823.84px;font-size:12px;color:#212121;font-weight:normal;">412,31</div>
<div class="b" style="left:418.00px;top:851.00px;width:1438.00px;height:1.00px;background:#E0E0E0"></div>
<svg class="i" style="left:1820.00px;top:824.10px;width:14.60px;height:14.60px;" viewBox="0 0 24 24"><path fill="#616161" d="M12 8c1.1 0 2-.9 2-2s-.9-2-2-2-2 .9-2 2 .9 2 2 2zm0 2c-1.1 0-2 .9-2 2s.9 2 2 2 2-.9 2-2-.9-2-2-2zm0 6c-1.1 0-2 .9-2 2s.9 2 2 2 2-.9 2-2-.9-2-2-2z"/></svg>
<div class="t" style="left:440.80px;top:868.84px;font-size:12px;color:#212121;font-weight:normal;letter-spacing:0.43px">16/01/2025</div>
<div class="t" style="left:700.00px;top:868.84px;font-size:12px;color:#212121;font-weight:normal;letter-spacing:-0.7px">CAFÉ</div>
<div class="t" style="left:820.00px;top:868.84px;font-size:12px;color:#212121;font-weight:normal;letter-spacing:-0.3px">Área 50%, Área 30%, Área 20%</div>
<div class="t" style="right:501.00px;top:868.84px;font-size:12px;color:#212121;font-weight:normal;">0,00</div>
<div class="t" style="right:315.50px;top:868.84px;font-size:12px;color:#212121;font-weight:normal;">-</div>
<div class="t" style="right:127.00px;top:868.84px;font-size:12px;color:#212121;font-weight:normal;">-</div>
<div class="b" style="left:418.00px;top:896.00px;width:1438.00px;height:1.00px;background:#E0E0E0"></div>
<svg class="i" style="left:1820.00px;top:869.10px;width:14.60px;height:14.60px;" viewBox="0 0 24 24"><path fill="#616161" d="M12 8c1.1 0 2-.9 2-2s-.9-2-2-2-2 .9-2 2 .9 2 2 2zm0 2c-1.1 0-2 .9-2 2s.9 2 2 2 2-.9 2-2-.9-2-2-2zm0 6c-1.1 0-2 .9-2 2s.9 2 2 2 2-.9 2-2-.9-2-2-2z"/></svg>
<div class="b" style="left:1856.00px;top:537.00px;width:21.00px;height:333.00px;background:#F1F1F1"></div>
<div class="b" style="left:1858.00px;top:558.00px;width:17.00px;height:228.00px;background:#C1C1C1"></div>
<svg class="i" style="left:1861.5px;top:545.5px;width:10px;height:6px" viewBox="0 0 10 6"><path fill="#A3A3A3" d="M0 6L5 0L10 6z"/></svg>
<svg class="i" style="left:1861.5px;top:864.5px;width:10px;height:6px" viewBox="0 0 10 6"><path fill="#5A5655" d="M0 0L5 6L10 0z"/></svg>
<div class="b" style="left:1892.00px;top:138.00px;width:17.00px;height:732.00px;background:#F1F1F1"></div>
<div class="b" style="left:1893.00px;top:159.00px;width:16.00px;height:620.00px;background:#C1C1C1"></div>
<svg class="i" style="left:1896.5px;top:146.5px;width:10px;height:6px" viewBox="0 0 10 6"><path fill="#A3A3A3" d="M0 6L5 0L10 6z"/></svg>
<svg class="i" style="left:1896.5px;top:862px;width:10px;height:6px" viewBox="0 0 10 6"><path fill="#5A5655" d="M0 0L5 6L10 0z"/></svg>
<div class="b" style="left:0.00px;top:869.00px;width:1909.00px;height:1.00px;background:#E1E3E3"></div>
</body></html>
